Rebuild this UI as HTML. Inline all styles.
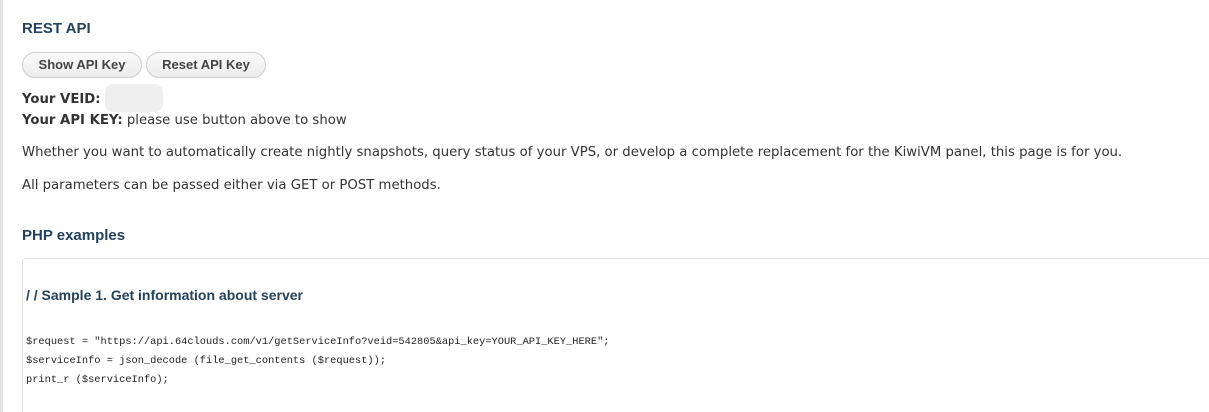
<!DOCTYPE html>
<html style="overflow:hidden"><head><meta charset="utf-8"><style>
html,body{margin:0;width:1209px;height:412px;overflow:hidden}
body{background:#fff;font-family:"DejaVu Sans",Verdana,sans-serif;font-size:13.25px;color:#333;position:relative}
.lb{position:absolute;left:0;top:0;width:3px;height:412px;background:#e4e4e4}
.a{position:absolute;white-space:nowrap}
h{position:absolute;font-family:"Liberation Sans",sans-serif;font-weight:bold;font-size:15px;color:#22425e}
.btn{position:absolute;top:52px;height:24px;border:1px solid #cfcfcf;border-radius:13px;background:linear-gradient(#fafafa,#ececec);font-family:"Liberation Sans",sans-serif;font-weight:bold;font-size:13px;color:#444;text-align:center;line-height:24px}
b{color:#333}
.box{position:absolute;left:22px;top:258px;width:1200px;height:160px;border:1px solid #e2e2e2;border-radius:4px}
.code{position:absolute;left:26px;font-family:"Liberation Mono",monospace;font-size:10.35px;color:#222;white-space:nowrap}
</style></head><body>
<div class="lb"></div>
<h style="left:22px;top:20px">REST API</h>
<div class="btn" style="left:22px;width:118px">Show API Key</div>
<div class="btn" style="left:146px;width:118px">Reset API Key</div>
<div style="position:absolute;left:105px;top:84px;width:58px;height:28px;background:#efefef;border-radius:8px"></div>
<div class="a" style="left:22px;top:92px"><b>Your VEID:</b></div>
<div class="a" style="left:22px;top:113px"><b>Your API KEY:</b> please use button above to show</div>
<div class="a" style="left:22px;top:145px">Whether you want to automatically create nightly snapshots, query status of your VPS, or develop a complete replacement for the KiwiVM panel, this page is for you.</div>
<div class="a" style="left:22px;top:178px">All parameters can be passed either via GET or POST methods.</div>
<h style="left:22px;top:227px">PHP examples</h>
<div class="box"></div>
<h style="left:26px;top:287px;font-size:14px">/ / Sample 1. Get information about server</h>
<div class="code" style="top:336px">$request = "https://api.64clouds.com/v1/getServiceInfo?veid=542805&amp;api_key=YOUR_API_KEY_HERE";</div>
<div class="code" style="top:355px">$serviceInfo = json_decode (file_get_contents ($request));</div>
<div class="code" style="top:374px">print_r ($serviceInfo);</div>
</body></html>
